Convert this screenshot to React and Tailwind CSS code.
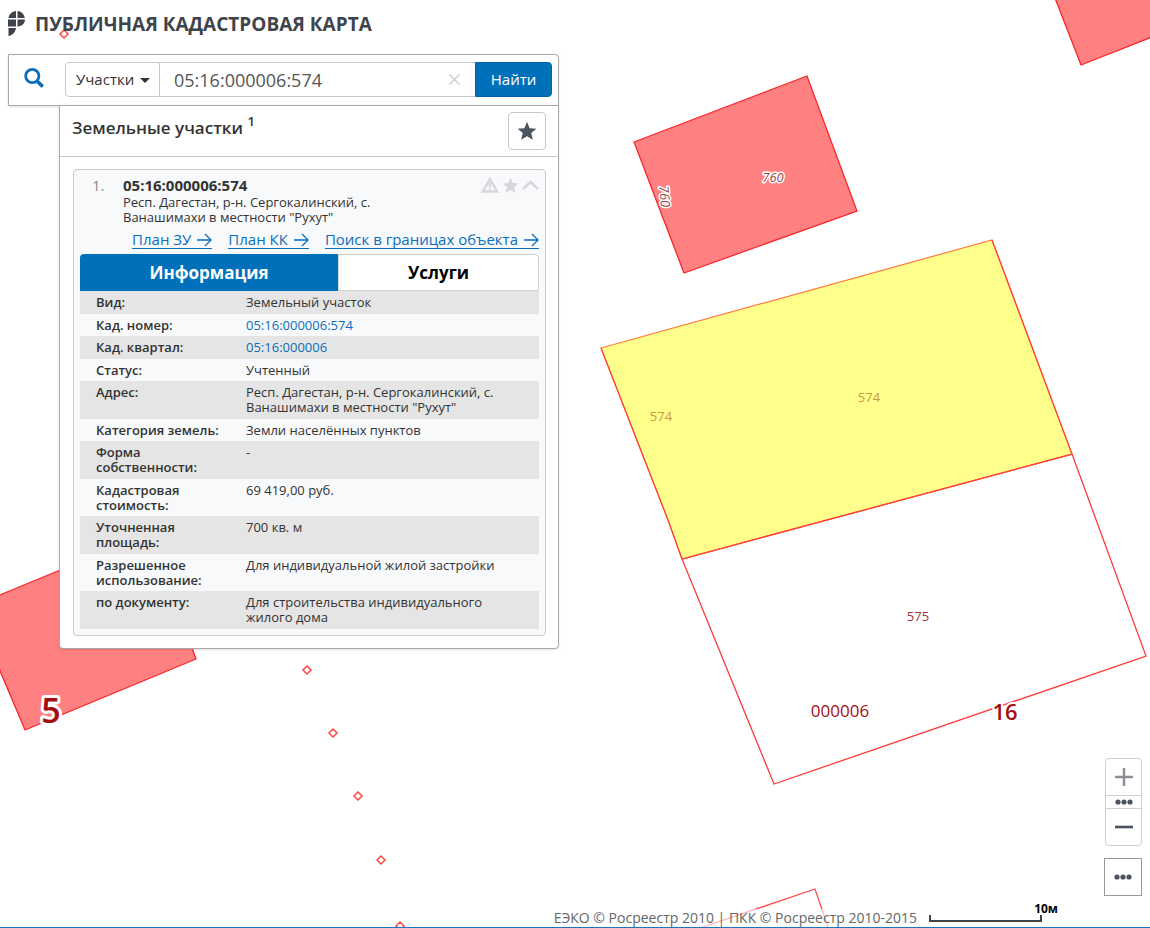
import React, { useState } from 'react';

const DETAILS = [
  { label: 'Вид:', value: 'Земельный участок' },
  { label: 'Кад. номер:', value: '05:16:000006:574', link: true },
  { label: 'Кад. квартал:', value: '05:16:000006', link: true },
  { label: 'Статус:', value: 'Учтенный' },
  { label: 'Адрес:', value: 'Респ. Дагестан, р-н. Сергокалинский, с. Ванашимахи в местности "Рухут"' },
  { label: 'Категория земель:', value: 'Земли населённых пунктов' },
  { label: 'Форма собственности:', value: '-' },
  { label: 'Кадастровая стоимость:', value: '69 419,00 руб.' },
  { label: 'Уточненная площадь:', value: '700 кв. м' },
  { label: 'Разрешенное использование:', value: 'Для индивидуальной жилой застройки' },
  { label: 'по документу:', value: 'Для строительства индивидуального жилого дома' },
];

const BOUNDARY_POINTS = [
  [64, 34],
  [307, 670],
  [333, 733],
  [358, 796],
  [381, 860],
  [400, 926],
];

const STAR = 'M10 0.8 L12.6 7.2 L19.4 7.7 L14.2 12.1 L15.9 18.8 L10 15.2 L4.1 18.8 L5.8 12.1 L0.6 7.7 L7.4 7.2 Z';

function Star({ className }) {
  return (
    <svg viewBox="0 0 20 20" className={className} fill="currentColor" aria-hidden="true">
      <path d={STAR} />
    </svg>
  );
}

function Dots() {
  return (
    <svg viewBox="0 0 18 6" className="w-[18px] h-[6px]" fill="#4b5361" aria-hidden="true">
      <circle cx="3" cy="3" r="2.6" />
      <circle cx="9" cy="3" r="2.6" />
      <circle cx="15" cy="3" r="2.6" />
    </svg>
  );
}

function Arrow() {
  return (
    <svg viewBox="0 0 15 14" className="inline-block w-[15px] h-[14px] ml-[6px] align-[-2px]" fill="none" stroke="currentColor" strokeWidth="1.3" aria-hidden="true">
      <path d="M0 7H14M8 1L14 7L8 13" />
    </svg>
  );
}

function ParcelMap() {
  return (
    <svg
      viewBox="0 0 1150 928"
      preserveAspectRatio="xMidYMid slice"
      className="absolute inset-0 w-full h-full"
    >
      <g fill="#ff8080" stroke="#f6262b" strokeWidth="1.3">
        <path d="M634 142L807 76L857 211L684 273Z" />
        <path d="M1055 -2L1081 65L1152 37L1152 -2Z" />
        <path d="M-10 599L150 533L196 659L25 730L-10 647Z" />
      </g>
      <path d="M682 559L1072 454L1146 656L774 784Z" fill="none" stroke="#ff3a3a" strokeWidth="1.3" />
      <path d="M601 348L992 240L1072 454L682 559L668 520Z" fill="#ffff8c" stroke="#ff7a3c" strokeWidth="1.2" />
      <path d="M601 348L668 520L682 559L1072 454L992 240" fill="none" stroke="#ff4238" strokeWidth="1.2" />
      <path d="M700 928L815 889L829 930" fill="none" stroke="#ff4a4a" strokeWidth="1.3" />
      <g fill="#fff" stroke="#ff4646" strokeWidth="1.5">
        {BOUNDARY_POINTS.map(([x, y]) => (
          <path key={`${x}-${y}`} d={`M${x} ${y - 4}l4 4l-4 4l-4 -4Z`} />
        ))}
      </g>
      <g fontSize="13" textAnchor="middle">
        <g fontStyle="italic" fill="#974848" stroke="#fff" strokeWidth="3" paintOrder="stroke" strokeLinejoin="round">
          <text x="773" y="182">760</text>
          <text transform="translate(660 197) rotate(84)">760</text>
        </g>
        <g fill="#cf9a3c">
          <text x="661" y="421">574</text>
          <text x="869" y="402">574</text>
        </g>
        <text x="918" y="621" fill="#a03238">575</text>
      </g>
      <g fill="#a20d12" stroke="#fff" paintOrder="stroke" strokeLinejoin="round" textAnchor="middle">
        <text x="840" y="717" fontSize="17" strokeWidth="3">000006</text>
        <text x="1005" y="720" fontSize="22" fontWeight="600" strokeWidth="4">16</text>
        <text x="51" y="723" fontSize="34" fontWeight="600" strokeWidth="6">5</text>
      </g>
    </svg>
  );
}

function Header() {
  return (
    <header className="flex items-center gap-[9px] h-[54px] pl-2 pb-[6px]">
      <svg viewBox="0 0 18 26" className="w-[18px] h-[26px]" fill="#3f434b" aria-hidden="true">
        <path d="M8 0V7H0.5C1 3 4 0.4 8 0Z" />
        <path d="M9.5 0C13 0 16 3 16.8 7H9.5Z" />
        <path d="M0 8.5H8V15.5H0Z" />
        <path d="M9.5 8.5H17C16.8 12.5 14 15.2 9.5 15.5Z" />
        <path d="M0.5 17H8C7.5 21 4.5 24.5 0.5 25Z" />
      </svg>
      <h1 className="text-[19px] leading-6 font-bold text-[#3f434b]">ПУБЛИЧНАЯ КАДАСТРОВАЯ КАРТА</h1>
    </header>
  );
}

function SearchBar({ query, setQuery }) {
  return (
    <form
      className="flex h-[52px] rounded-tr-sm border border-[#a9a9a9] bg-white py-[7px] pr-[6px] shadow-sm"
      onSubmit={(e) => e.preventDefault()}
    >
      <div className="w-14 flex justify-center pt-[6px] pr-[6px] shrink-0">
        <svg viewBox="0 0 20 20" className="w-5 h-5" fill="none" stroke="#0a6ebd" aria-hidden="true">
          <circle cx="8.3" cy="8" r="6.6" strokeWidth="2.8" />
          <path d="M13 13L18.8 18.6" strokeWidth="3.6" />
        </svg>
      </div>
      <div className="relative w-[95px] shrink-0">
        <select
          aria-label="Тип объекта"
          className="appearance-none w-full h-[35px] rounded-l-sm border border-[#c8c8c8] bg-white pl-[10px] text-[15px] text-[#333]"
        >
          <option>Участки</option>
        </select>
        <svg viewBox="0 0 10 5" className="absolute right-[10px] top-[16px] w-[10px] h-[5px] pointer-events-none" fill="#333" aria-hidden="true">
          <path d="M0 0H10L5 5Z" />
        </svg>
      </div>
      <div className="flex flex-1 h-[35px] items-center border-y border-[#c8c8c8] pr-[15px]">
        <input
          type="text"
          aria-label="Кадастровый номер"
          value={query}
          onChange={(e) => setQuery(e.target.value)}
          className="flex-1 min-w-0 h-full pl-[14px] text-[18px] text-[#555] outline-none"
        />
        <button type="button" aria-label="Очистить" onClick={() => setQuery('')}>
          <svg viewBox="0 0 11 11" className="w-[11px] h-[11px]" stroke="#ccc" strokeWidth="1.4" aria-hidden="true">
            <path d="M0.5 0.5L10.5 10.5M10.5 0.5L0.5 10.5" />
          </svg>
        </button>
      </div>
      <button type="submit" className="w-[77px] h-[35px] rounded-r-sm border border-[#0064a8] bg-[#0070ba] text-[15px] text-white">
        Найти
      </button>
    </form>
  );
}

function ParcelCard() {
  return (
    <article className="rounded-sm border border-[#c9cbcd] bg-[#f8f9fb] p-[6px]">
      <div className="flex h-[45px] text-[#333]">
        <span className="w-[43px] pl-3 text-[15px] leading-[19px] text-[#8b8b8b]">1.</span>
        <div className="flex-1">
          <h3 className="text-[15px] leading-[19px] font-bold">05:16:000006:574</h3>
          <p className="w-[270px] text-[13px] leading-[15px]">
            Респ. Дагестан, р-н. Сергокалинский, с. Ванашимахи в местности "Рухут"
          </p>
        </div>
        <div className="flex items-center gap-[3px] h-[18px] text-[#d5d7da]">
          <button type="button" aria-label="Сообщить об ошибке">
            <svg viewBox="0 0 18 16" className="w-[18px] h-4" fill="none" stroke="currentColor" strokeWidth="2.4" aria-hidden="true">
              <path d="M9 2L16.2 14.5H1.8Z" />
              <path d="M9 6V10.5M9 11.5V13" />
            </svg>
          </button>
          <button type="button" aria-label="В избранное"><Star className="w-[17px] h-[17px]" /></button>
          <button type="button" aria-label="Свернуть">
            <svg viewBox="0 0 17 10" className="w-[17px] h-[10px]" fill="none" stroke="currentColor" strokeWidth="2.4" aria-hidden="true">
              <path d="M1 9L8.5 2L16 9" />
            </svg>
          </button>
        </div>
      </div>

      <nav className="flex justify-end gap-4 pt-2 h-[33px] text-[15px] leading-5 text-[#0a6ebd]">
        <a href="#plan-zu" className="h-5 border-b border-current">План ЗУ<Arrow /></a>
        <a href="#plan-kk" className="h-5 border-b border-current">План КК<Arrow /></a>
        <a href="#search" className="h-5 border-b border-current">Поиск в границах объекта<Arrow /></a>
      </nav>

      <div className="flex text-[17px] font-bold">
        <button type="button" className="w-[258px] h-[37px] rounded-tl-sm bg-[#0070ba] text-white">Информация</button>
        <button type="button" className="flex-1 h-[37px] rounded-tr-sm border border-[#d0d2d4] bg-white text-black">Услуги</button>
      </div>

      <table className="w-full table-fixed text-[13px] leading-[15px] text-[#333]">
        <tbody>
          {DETAILS.map((row) => (
            <tr key={row.label} className="group align-top odd:bg-[#e5e5e5]">
              <th scope="row" className="w-[166px] pl-4 pr-5 pt-1 pb-[3px] group-odd:pb-1 text-left font-semibold">{row.label}</th>
              <td className="pr-6 pt-1 pb-[3px] group-odd:pb-1">
                {row.link ? <a href="#parcel" className="text-[#0a6ebd]">{row.value}</a> : row.value}
              </td>
            </tr>
          ))}
        </tbody>
      </table>
    </article>
  );
}

function ResultsPanel() {
  return (
    <section className="ml-[51px] -mt-px border border-[#a9a9a9] rounded-b-sm bg-white shadow-sm">
      <div className="flex items-start justify-between h-[51px] pl-3 pr-3 pt-[6px] border-b border-[#c9c9c9]">
        <h2 className="text-[17px] leading-8 font-semibold text-[#333]">
          Земельные участки <sup className="text-[13px] -top-2">1</sup>
        </h2>
        <button type="button" aria-label="Избранное" className="flex items-center justify-center w-[38px] h-[38px] rounded-sm border border-[#c8c8c8] bg-white text-[#4b5361]">
          <Star className="w-5 h-5" />
        </button>
      </div>
      <div className="p-3 pl-[13px]">
        <ParcelCard />
      </div>
    </section>
  );
}

function MapControls() {
  return (
    <div className="flex flex-col items-end gap-3">
      <div className="flex flex-col w-[37px] h-[88px] rounded-sm border border-[#d0d0d0] bg-white divide-y divide-[#d0d0d0]">
        <button type="button" aria-label="Приблизить" className="flex flex-1 items-center justify-center">
          <svg viewBox="0 0 18 18" className="w-[18px] h-[18px]" stroke="#8b8e94" strokeWidth="2.4" aria-hidden="true">
            <path d="M9 0V18M0 9H18" />
          </svg>
        </button>
        <button type="button" aria-label="Масштаб" className="flex h-[13px] items-center justify-center"><Dots /></button>
        <button type="button" aria-label="Отдалить" className="flex flex-1 items-center justify-center">
          <svg viewBox="0 0 18 18" className="w-[18px] h-[18px]" stroke="#4b5361" strokeWidth="2.6" aria-hidden="true">
            <path d="M0 9H18" />
          </svg>
        </button>
      </div>
      <button type="button" aria-label="Меню" className="flex w-[38px] h-[38px] items-center justify-center border border-[#999] bg-white"><Dots /></button>
    </div>
  );
}

export default function App() {
  const [query, setQuery] = useState('05:16:000006:574');

  return (
    <div className="relative flex min-h-screen flex-col overflow-hidden bg-white font-['Open_Sans',sans-serif]">
      <ParcelMap />
      <div className="relative">
        <Header />
        <main className="ml-2 w-full max-w-[551px]">
          <SearchBar query={query} setQuery={setQuery} />
          <ResultsPanel />
        </main>
      </div>
      <div className="absolute right-2 bottom-8">
        <MapControls />
      </div>
      <footer className="absolute inset-x-0 bottom-0 flex items-end justify-end gap-3 pr-[108px] border-b border-[#1c75bc]">
        <span className="bg-white/60 text-[14px] leading-[18px] text-[#666]">ЕЭКО © Росреестр 2010 | ПКК © Росреестр 2010-2015</span>
        <div className="relative w-[113px] h-[26px]">
          <div className="absolute bottom-[5px] w-full h-[7px] border-2 border-t-0 border-[#444]"></div>
          <span className="absolute -right-4 top-0 text-[12px] leading-4 font-bold text-black">10м</span>
        </div>
      </footer>
    </div>
  );
}
